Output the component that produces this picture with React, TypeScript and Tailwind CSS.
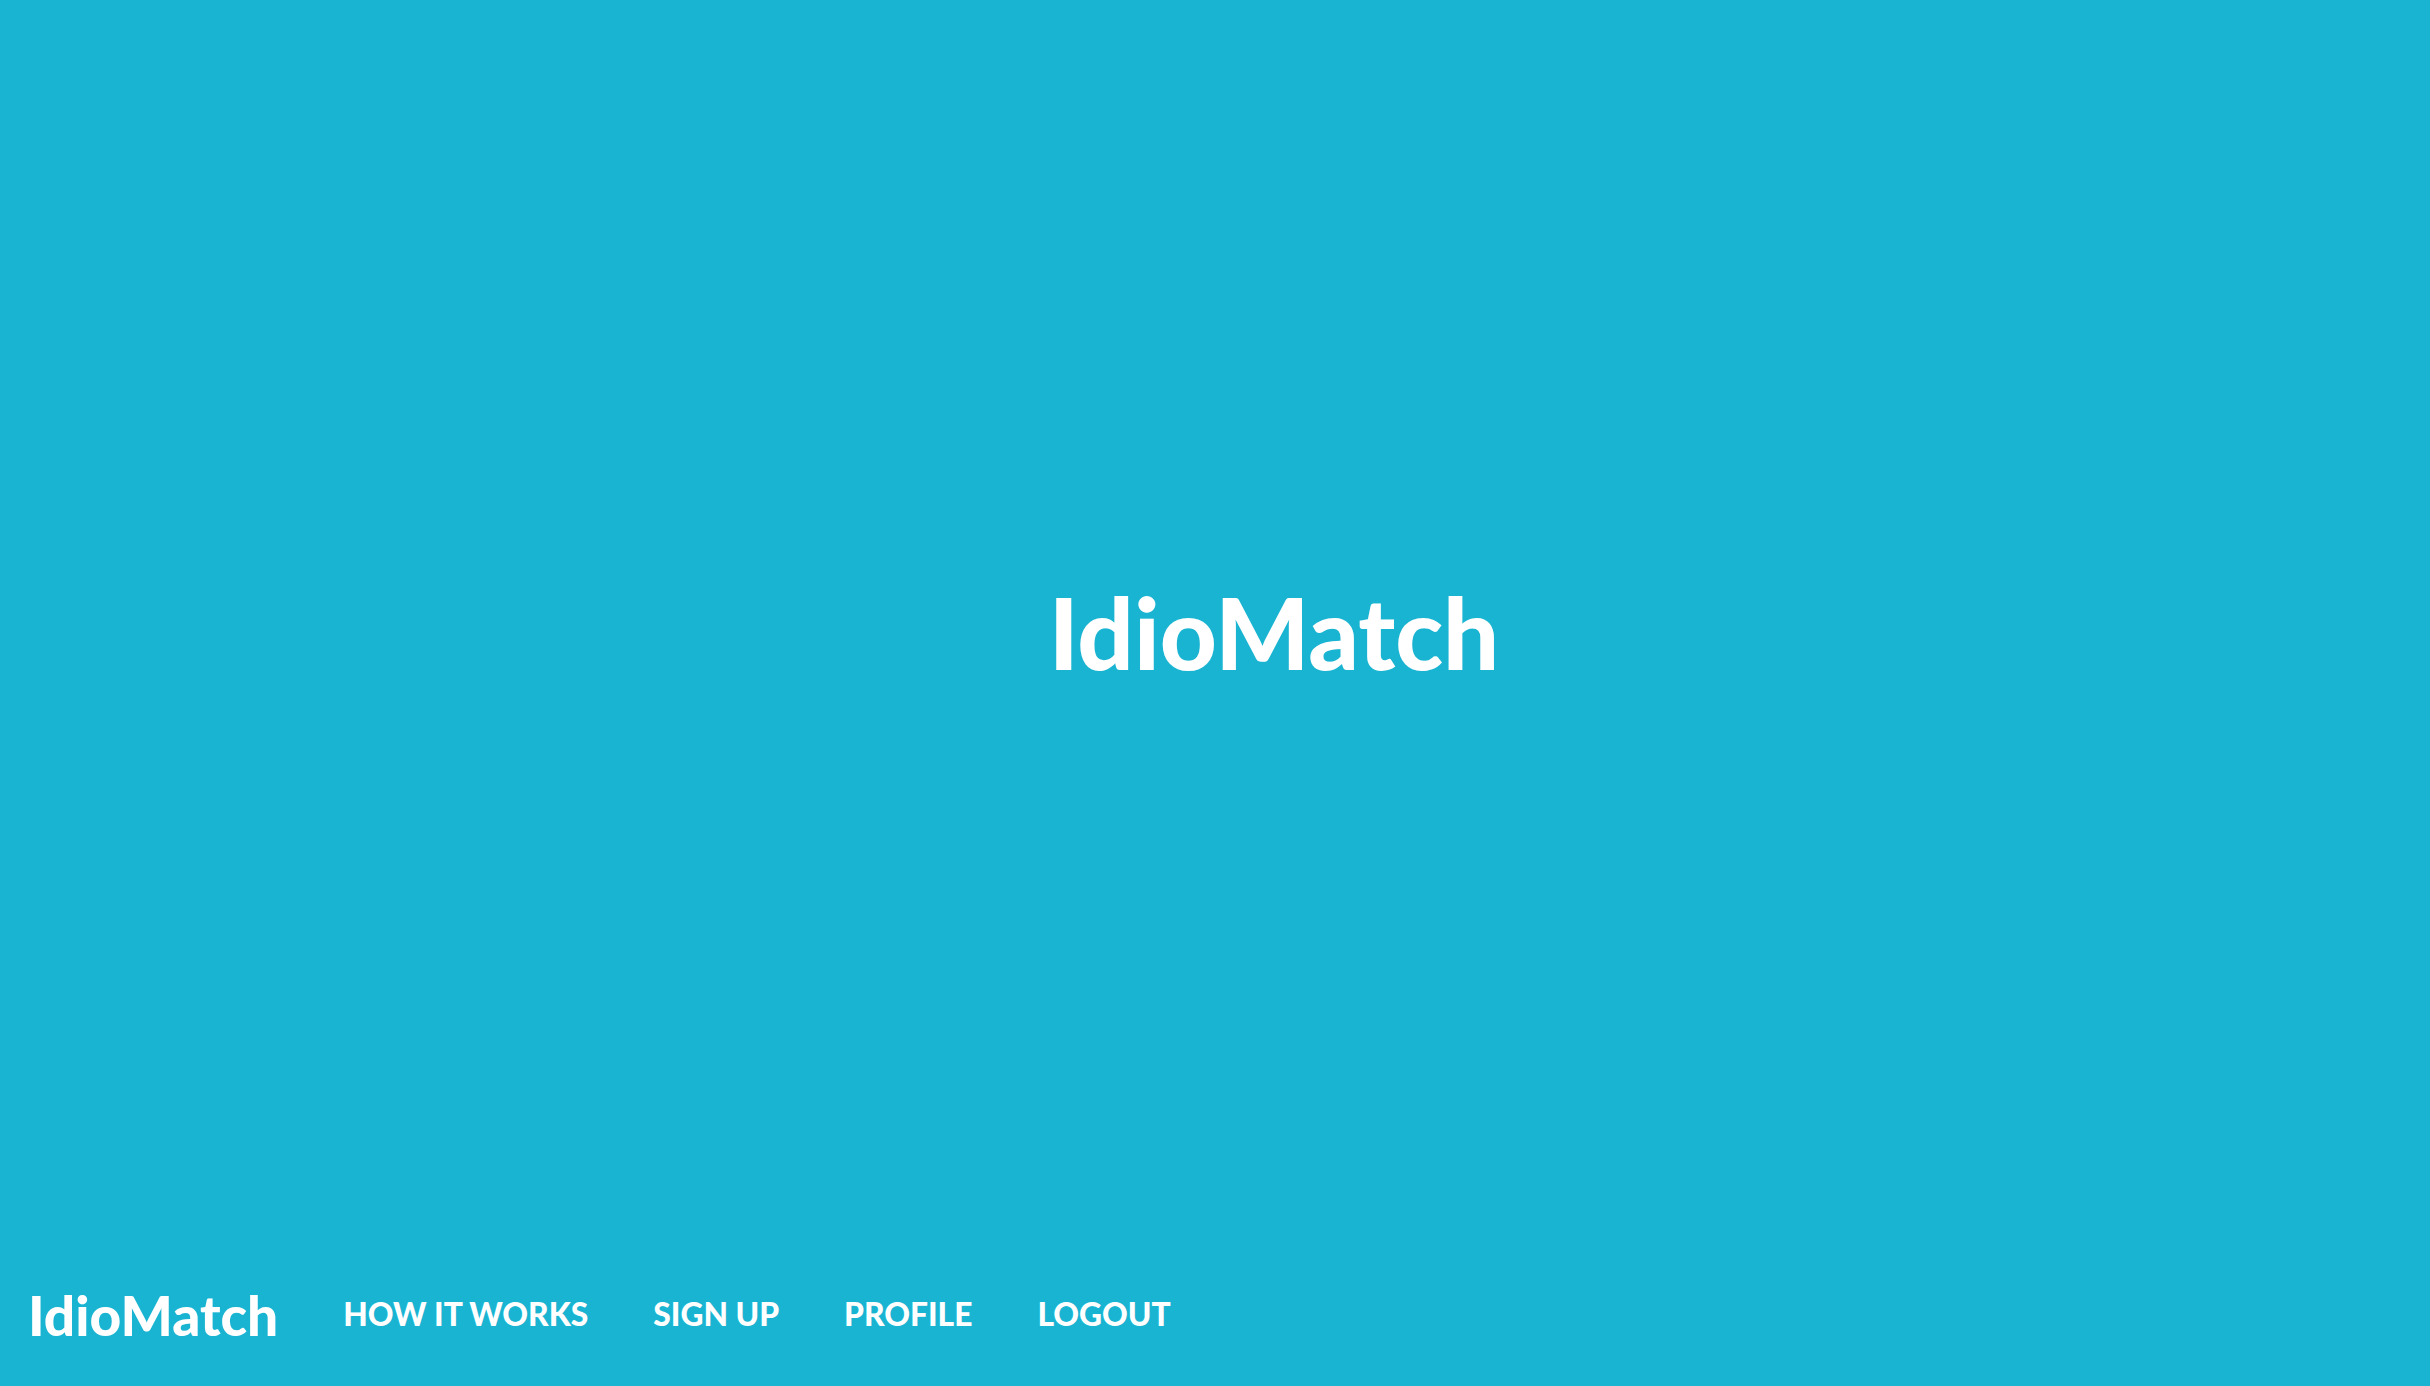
import React from "react";

export default function App() {
  return (
    <div
      className="w-[2430px] h-[1386px] bg-[#1ab4d3] text-white flex flex-col overflow-hidden"
      style={{ fontFamily: "Lato, 'Open Sans', sans-serif" }}
    >
      <main className="h-[1262px] flex items-center justify-center pl-[118px]">
        <h1 className="text-[99px] font-black leading-none">IdioMatch</h1>
      </main>
      <nav className="h-[124px] flex items-center pl-[28px] pb-[18px] gap-[65px]">
        <span className="text-[55px] font-black leading-none">IdioMatch</span>
        <a className="text-[31.75px] font-black leading-none uppercase">How it works</a>
        <a className="text-[31.75px] font-black leading-none uppercase">Sign up</a>
        <a className="text-[31.75px] font-black leading-none uppercase">Profile</a>
        <a className="text-[31.75px] font-black leading-none uppercase">Logout</a>
      </nav>
    </div>
  );
}
